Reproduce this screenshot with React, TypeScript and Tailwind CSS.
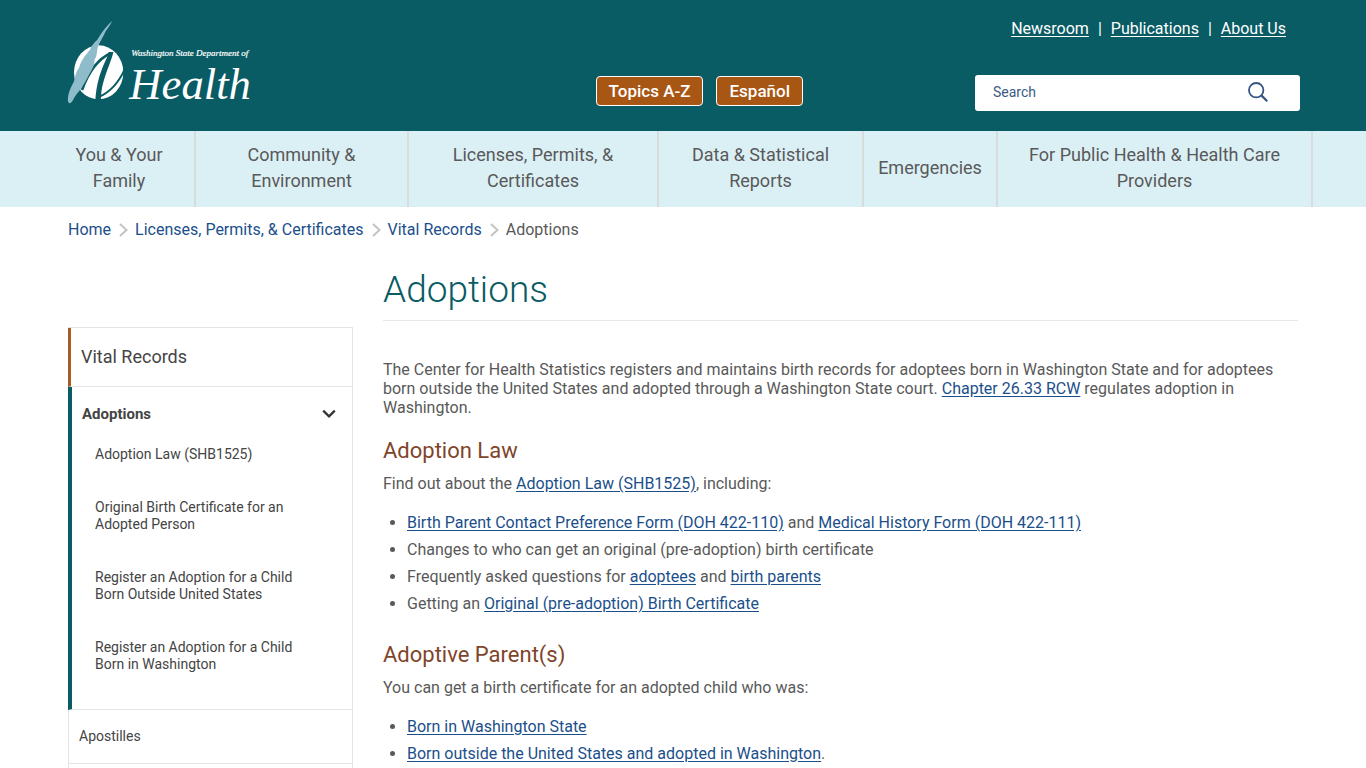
import type { ReactNode } from 'react';

const topLinks = ['Newsroom', 'Publications', 'About Us'];

const navItems = [
  'You & Your Family',
  'Community & Environment',
  'Licenses, Permits, & Certificates',
  'Data & Statistical Reports',
  'Emergencies',
  'For Public Health & Health Care Providers',
];

const crumbs = ['Home', 'Licenses, Permits, & Certificates', 'Vital Records'];

const sideLinks = [
  'Adoption Law (SHB1525)',
  'Original Birth Certificate for an Adopted Person',
  'Register an Adoption for a Child Born Outside United States',
  'Register an Adoption for a Child Born in Washington',
];

// Department logo - feather over a circle, with the name beside it
function Logo() {
  return (
    <svg viewBox="24 30 552 258" className="block h-[86px] w-[184px] overflow-visible" role="img" aria-label="Washington State Department of Health">
      <ellipse cx="116" cy="187" rx="74" ry="81" fill="#fff" />
      {/* strokes of the "h" cut out of the circle */}
      <path d="M66 240 C84 190 112 148 152 130" fill="none" stroke="#095b64" strokeWidth="8" />
      <path d="M146 126 L160 126 C156 150 130 200 124 246 L122 274 L106 274 C108 220 124 176 142 140 Z" fill="#095b64" />
      <path d="M118 260 C150 246 174 222 194 178" fill="none" stroke="#095b64" strokeWidth="6" />
      <path d="M36 272 L60 236 L64 258 L44 280 Z" fill="#095b64" />
      <path d="M156 33 C140 48 124 68 112 89 C102 98 94 108 90 119 C76 136 62 152 58 172 C48 184 46 198 42 214 C34 230 26 245 24 262 C22 278 28 286 37 274 C42 264 48 254 57 244 C68 230 78 212 87 194 C98 176 104 164 104 148 C112 136 110 124 114 110 C120 94 130 80 137 64 C144 54 152 44 156 33 Z" fill="#8fbccb" />
      <text x="214" y="139" fontSize="27" className="fill-white font-['Liberation_Serif'] italic" stroke="#fff" strokeWidth="0.6">
        Washington State Department of
      </text>
      <text x="208" y="267" fontSize="134" className="fill-white font-['Liberation_Serif'] italic">
        Health
      </text>
    </svg>
  );
}

function Chevron() {
  return (
    <svg viewBox="0 0 9 14" className="mr-[7px] ml-2 h-[14px] w-[9px]" fill="none" stroke="#c4c4c4" strokeWidth="2">
      <path d="M1 1 L7.5 7 L1 13" />
    </svg>
  );
}

function Header() {
  return (
    <header className="bg-[#095b64] text-white">
      <div className="flex h-[131px] pr-[66px] pl-[68px]">
        <a href="#" className="mt-5 shrink-0 self-start">
          <Logo />
        </a>
        <div className="mt-[76px] mr-[172px] ml-auto flex gap-[13px] self-start">
          {['Topics A-Z', 'Español'].map((label) => (
            <button key={label} type="button" className="h-[30px] rounded border border-white bg-[#a85614] px-3 text-[17px] leading-7 font-medium">
              {label}
            </button>
          ))}
        </div>
        <div className="w-[325px] shrink-0 pt-[19px]">
          <div className="flex justify-end pr-[14px] text-base leading-5">
            {topLinks.map((link, i) => (
              <span key={link}>
                {i > 0 && <span className="mx-[9px]">|</span>}
                <a href="#" className="underline underline-offset-2">{link}</a>
              </span>
            ))}
          </div>
          <form className="mt-9 flex h-9 items-center rounded-[3px] bg-white pr-8 pb-0.5 pl-[18px]">
            <input
              type="search"
              aria-label="Search"
              placeholder="Search"
              className="min-w-0 flex-1 text-sm text-[#3b5b85] outline-none placeholder:text-[#3b5b85]"
            />
            <button type="button" aria-label="Submit search">
              <svg viewBox="0 0 20 20" className="h-5 w-5" fill="none" stroke="#335580" strokeWidth="1.8">
                <circle cx="8.2" cy="8.2" r="7.2" />
                <path d="M13.4 13.4 L19.2 19.2" strokeWidth="2.2" />
              </svg>
            </button>
          </form>
        </div>
      </div>
    </header>
  );
}

function MainNav() {
  return (
    <nav className="bg-[#dbf0f5] pr-[53px] pl-11">
      <ul className="grid grid-cols-[152fr_213fr_250fr_205fr_134fr_315fr]">
        {navItems.map((item) => (
          <li key={item} className="flex border-r-2 border-[#d9dcdc]">
            <a href="#" className="flex min-h-[76px] flex-1 items-center justify-center px-[14px] pt-[11px] pb-[13px] text-center text-lg leading-[26px]">
              {item}
            </a>
          </li>
        ))}
      </ul>
    </nav>
  );
}

function Breadcrumbs() {
  return (
    <nav aria-label="Breadcrumb" className="flex items-center px-[68px] pt-[13px] text-base leading-5">
      {crumbs.map((crumb) => (
        <span key={crumb} className="flex items-center">
          <a href="#" className="text-[#1b4f8b]">{crumb}</a>
          <Chevron />
        </span>
      ))}
      <span>Adoptions</span>
    </nav>
  );
}

function Sidebar() {
  return (
    <aside className="mt-[87px] w-[285px] shrink-0 border-t border-r border-[#e4e4e4] text-sm leading-[17px] text-[#444]">
      <a href="#" className="flex h-[59px] items-center border-b border-l-3 border-b-[#e4e4e4] border-l-[#a85a20] pl-[10px] text-lg">
        Vital Records
      </a>
      <div className="border-b border-l-4 border-b-[#e4e4e4] border-l-[#095b64] pb-[18px]">
        <a href="#" className="flex items-center justify-between pt-[18px] pr-4 pb-[5px] pl-[10px] text-[15px] leading-[18px] font-bold">
          Adoptions
          <svg viewBox="0 0 14 10" className="h-[10px] w-[14px]" fill="none" stroke="#333" strokeWidth="2.2">
            <path d="M1.2 1.6 L7 7.4 L12.8 1.6" />
          </svg>
        </a>
        <ul>
          {sideLinks.map((link) => (
            <li key={link}>
              <a href="#" className="block py-[18px] pr-12 pl-[23px]">{link}</a>
            </li>
          ))}
        </ul>
      </div>
      <a href="#" className="flex h-[54px] items-center border-b border-l border-[#e4e4e4] pl-[10px]">Apostilles</a>
      <div className="h-[54px] border-b border-l border-[#e4e4e4]" />
    </aside>
  );
}

function TextLink({ children }: { children: ReactNode }) {
  return <a href="#" className="text-[#1b4f8b] underline underline-offset-2">{children}</a>;
}

function SectionTitle({ children }: { children: ReactNode }) {
  return <h2 className="mt-[21px] mb-[10px] text-[22px] leading-[26px] text-[#7f452a]">{children}</h2>;
}

function BulletList({ children }: { children: ReactNode }) {
  return <ul className="mt-5 list-disc pl-6 [&>li]:pb-2">{children}</ul>;
}

function Content() {
  return (
    <main className="mt-[27px] min-w-0 flex-1 text-base leading-[19px]">
      <h1 className="border-b border-[#e8e8e8] pb-[7px] text-[37px] leading-[46px] font-light text-[#095b64]">Adoptions</h1>
      <p className="mt-[39px]">
        The Center for Health Statistics registers and maintains birth records for adoptees born in Washington State and for
        adoptees born outside the United States and adopted through a Washington State court.{' '}
        <TextLink>Chapter 26.33 RCW</TextLink> regulates adoption in Washington.
      </p>

      <SectionTitle>Adoption Law</SectionTitle>
      <p>
        Find out about the <TextLink>Adoption Law (SHB1525)</TextLink>, including:
      </p>
      <BulletList>
        <li>
          <TextLink>Birth Parent Contact Preference Form (DOH 422-110)</TextLink> and{' '}
          <TextLink>Medical History Form (DOH 422-111)</TextLink>
        </li>
        <li>Changes to who can get an original (pre-adoption) birth certificate</li>
        <li>
          Frequently asked questions for <TextLink>adoptees</TextLink> and <TextLink>birth parents</TextLink>
        </li>
        <li>
          Getting an <TextLink>Original (pre-adoption) Birth Certificate</TextLink>
        </li>
      </BulletList>

      <SectionTitle>Adoptive Parent(s)</SectionTitle>
      <p>You can get a birth certificate for an adopted child who was:</p>
      <BulletList>
        <li>
          <TextLink>Born in Washington State</TextLink>
        </li>
        <li>
          <TextLink>Born outside the United States and adopted in Washington</TextLink>.
        </li>
      </BulletList>
    </main>
  );
}

export default function App() {
  return (
    <div className="h-screen overflow-hidden bg-white font-[Roboto,sans-serif] text-[#595959]">
      <Header />
      <MainNav />
      <Breadcrumbs />
      <div className="flex gap-[30px] px-[68px]">
        <Sidebar />
        <Content />
      </div>
    </div>
  );
}
